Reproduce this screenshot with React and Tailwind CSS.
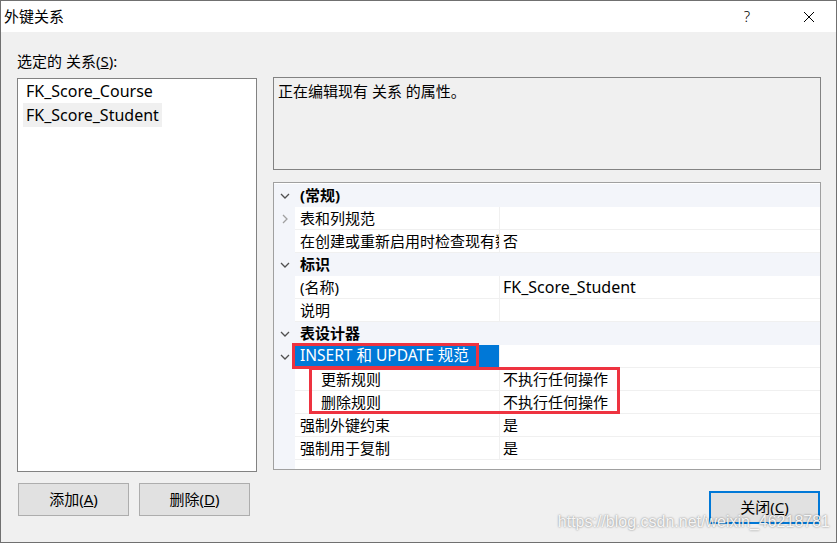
import React from "react";

const FONT = { fontFamily: '"Noto Sans", "Noto Sans CJK SC", sans-serif' };

function Down() {
  return (
    <svg width="10" height="6" viewBox="0 0 10 6">
      <path d="M1 1 L5 5 L9 1" fill="none" stroke="#505050" strokeWidth="1.3" />
    </svg>
  );
}
function Right() {
  return (
    <svg width="6" height="10" viewBox="0 0 6 10">
      <path d="M1 1 L5 5 L1 9" fill="none" stroke="#a0a0a0" strokeWidth="1.3" />
    </svg>
  );
}

function Cat({ label }) {
  return (
    <div className="flex h-[23px] bg-[#f3f5fa]">
      <div className="w-[21px] shrink-0 flex items-center justify-center pl-[1px]">
        <Down />
      </div>
      <div className="flex-1 flex items-center pl-[5px] font-bold text-[15px] text-black">{label}</div>
    </div>
  );
}

function Row({ name, value, indent, selected, chevron, latinValue, latinName }) {
  return (
    <div className="flex h-[23px]">
      <div className="w-[21px] shrink-0 bg-[#f3f5fa] flex items-center justify-center pl-[1px]">
        {chevron === "down" && <Down />}
        {chevron === "right" && <Right />}
      </div>
      <div
        className={
          "w-[204px] shrink-0 flex items-center overflow-hidden whitespace-nowrap border-b " +
          (latinName ? "text-[15.5px] " : "text-[15px] ") +
          (selected ? "bg-[#0078d7] text-white border-[#0078d7]" : "text-black border-[#f0f0f0]") +
          (indent ? " pl-[26px]" : " pl-[5px]")
        }
      >
        {name}
      </div>
      <div className="w-[1px] shrink-0 bg-[#f0f0f0]" />
      <div
        className={
          "flex-1 flex items-center pl-[3px] text-black border-b border-[#f0f0f0] whitespace-nowrap " +
          (latinValue ? "text-[16px]" : "text-[15px]")
        }
      >
        {value}
      </div>
    </div>
  );
}

export default function App() {
  return (
    <div
      className="relative w-[837px] h-[543px] border border-[#707070] bg-[#f0f0f0] flex flex-col overflow-hidden"
      style={FONT}
    >
      {/* title bar */}
      <div className="h-[31px] shrink-0 bg-white flex items-center">
        <div className="pl-[3px] text-[15px] text-black">外键关系</div>
        <div className="flex-1" />
        <div className="w-[46px] text-center text-[15px] text-black font-light">?</div>
        <div className="w-[16px]" />
        <div className="w-[46px] flex items-center justify-center mr-[4px]">
          <svg width="12" height="12" viewBox="0 0 12 12">
            <path d="M1 1 L11 11 M11 1 L1 11" stroke="#000" strokeWidth="1" />
          </svg>
        </div>
      </div>

      {/* body */}
      <div className="flex-1 flex pl-[16px] pr-[16px] pt-[20px]">
        {/* left column */}
        <div className="w-[240px] shrink-0 flex flex-col">
          <div className="h-[18px] leading-[18px] text-[15px] text-black">
            选定的 关系(<span className="underline">S</span>):
          </div>
          <div className="mt-[8px] h-[394px] bg-white border border-[#828282] pl-[5px] flex flex-col items-start">
            <div className="h-[24px] flex items-center px-[3px] text-[16px] text-black">FK_Score_Course</div>
            <div className="h-[24px] flex items-center px-[3px] text-[16px] text-black bg-[#f0f0f0]">
              FK_Score_Student
            </div>
          </div>
          <div className="mt-[11px] flex gap-[10px] pl-[1px]">
            <button className="w-[111px] h-[33px] bg-[#e1e1e1] border border-[#adadad] text-[15px] text-black">
              添加(<span className="underline">A</span>)
            </button>
            <button className="w-[111px] h-[33px] bg-[#e1e1e1] border border-[#adadad] text-[15px] text-black">
              删除(<span className="underline">D</span>)
            </button>
          </div>
        </div>

        {/* right column */}
        <div className="ml-[16px] w-[548px] shrink-0 flex flex-col">
          <div className="mt-[25px] h-[93px] border border-[#828282] bg-[#f0f0f0] px-[4px] pt-[2px] text-[15px] text-black">
            正在编辑现有 关系 的属性。
          </div>
          <div className="relative mt-[12px] h-[288px] border border-[#a0a0a0] bg-white pt-[1px] flex flex-col">
            <Cat label="(常规)" />
            <Row name="表和列规范" value="" chevron="right" />
            <Row name="在创建或重新启用时检查现有数据" value="否" />
            <Cat label="标识" />
            <Row name="(名称)" value="FK_Score_Student" latinValue />
            <Row name="说明" value="" />
            <Cat label="表设计器" />
            <Row name="INSERT 和 UPDATE 规范" value="" selected chevron="down" latinName />
            <Row name="更新规则" value="不执行任何操作" indent />
            <Row name="删除规则" value="不执行任何操作" indent />
            <Row name="强制外键约束" value="是" />
            <Row name="强制用于复制" value="是" />
            <div className="flex-1 flex">
              <div className="w-[21px] bg-[#f3f5fa]" />
            </div>
            {/* annotation boxes */}
            <div className="absolute left-[18px] top-[160px] w-[187px] h-[26px] border-[3px] border-[#ee3340]" />
            <div className="absolute left-[35px] top-[184px] w-[311px] h-[47px] border-[3px] border-[#ee3340]" />
          </div>
          <div className="mt-[21px] mr-[1px] self-end w-[111px] h-[33px] border-2 border-[#0078d7] bg-[#e1e1e1] flex items-center justify-center text-[15px] text-black">
            关闭(<span className="underline">C</span>)
          </div>
        </div>
      </div>

      {/* watermark */}
      <div
        className="absolute right-[6px] bottom-[8px] text-[16px] text-white/90 [text-shadow:0_0_2px_rgba(0,0,0,0.55)]"
        style={{ fontFamily: '"Liberation Sans", Arial, sans-serif' }}
      >
        https://blog.csdn.net/weixin_46218781
      </div>
    </div>
  );
}
